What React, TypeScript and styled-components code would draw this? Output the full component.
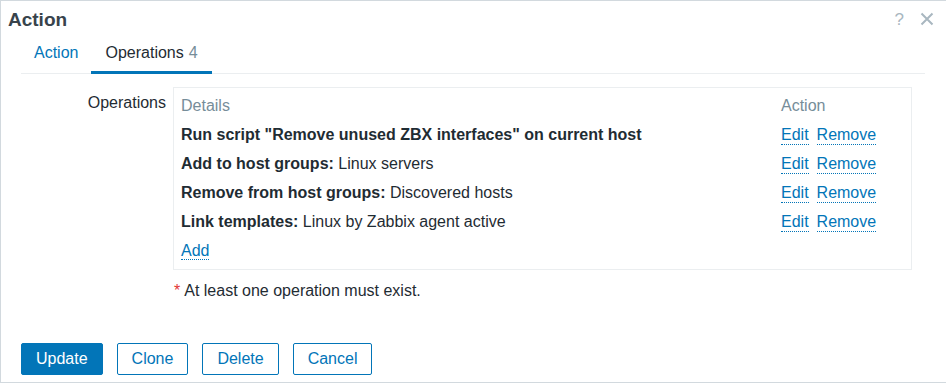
import { FC } from "react"
import styled, { createGlobalStyle } from "styled-components"

const GlobalStyle = createGlobalStyle`
  html, body {
    margin: 0;
    padding: 0;
    background: #ffffff;
  }
  body {
    font-family: "Liberation Sans", Arial, sans-serif;
    font-size: 16px;
    color: #1f2c33;
  }
  * {
    box-sizing: border-box;
  }
`

const Dialog = styled.div`
  width: 946px;
  height: 383px;
  border: 1px solid #d2d9de;
  border-right: none;
  display: flex;
  flex-direction: column;
  background: #ffffff;
`

const Header = styled.div`
  height: 36px;
  display: flex;
  align-items: center;
  justify-content: space-between;
  padding: 0 12px 0 7px;
`

const Title = styled.h1`
  margin: 0;
  font-size: 19px;
  font-weight: bold;
  color: #38434c;
  line-height: 1;
`

const HeaderIcons = styled.div`
  display: flex;
  align-items: center;
  gap: 16px;
  color: #a9b7c0;
`

const HelpIcon = styled.span`
  font-size: 17px;
  line-height: 1;
`

const CloseButton = styled.span`
  display: flex;
  align-items: center;
`

const Tabs = styled.div`
  display: flex;
  margin: 0 21px 0 20px;
  border-bottom: 1px solid #ebeef0;
`

const Tab = styled.div<{ $active?: boolean }>`
  height: 37px;
  display: flex;
  align-items: center;
  padding: 0 ${({ $active }) => ($active ? "14px" : "13px")} 3px;
  color: ${({ $active }) => ($active ? "#1f2c33" : "#0275b8")};
  border-bottom: 3px solid ${({ $active }) => ($active ? "#0275b8" : "transparent")};
  margin-bottom: -1px;
`

const TabCount = styled.span`
  color: #768d99;
  margin-left: 5px;
`

const Content = styled.div`
  flex: 1;
  padding: 13px 34px 0 21px;
`

const FormRow = styled.div`
  display: grid;
  grid-template-columns: 144px 739px;
  column-gap: 7px;
`

const FormLabel = styled.div`
  text-align: right;
  padding-top: 7px;
`

const OperationsBox = styled.div`
  border: 1px solid #ebeef0;
  padding: 3px 8px 4px 7px;
`

const OpRow = styled.div`
  display: grid;
  grid-template-columns: 1fr 122px;
  height: 29px;
  align-items: center;
`

const HeadCell = styled.div`
  color: #768d99;
`

const Bold = styled.b`
  font-weight: bold;
`

const Actions = styled.div`
  display: flex;
  gap: 8px;
`

const Link = styled.a`
  color: #0275b8;
  text-decoration: none;
  border-bottom: 1px dotted #0275b8;
  line-height: 19px;
  cursor: pointer;
`

const Required = styled.div`
  margin: 12px 0 0 152px;
  display: flex;
  align-items: baseline;
`

const Asterisk = styled.span`
  color: #e33734;
  margin-right: 4px;
`

const Footer = styled.div`
  display: flex;
  gap: 14px;
  padding: 0 0 7px 20px;
`

const Button = styled.button<{ $primary?: boolean }>`
  height: 32px;
  padding: 0 14px;
  font-family: inherit;
  font-size: 16px;
  border-radius: 2px;
  border: 1px solid #0275b8;
  background: ${({ $primary }) => ($primary ? "#0275b8" : "#ffffff")};
  color: ${({ $primary }) => ($primary ? "#ffffff" : "#0275b8")};
  cursor: pointer;
`

interface Operation {
  label: string
  value?: string
}

const operations: Operation[] = [
  { label: 'Run script "Remove unused ZBX interfaces" on current host' },
  { label: "Add to host groups:", value: "Linux servers" },
  { label: "Remove from host groups:", value: "Discovered hosts" },
  { label: "Link templates:", value: "Linux by Zabbix agent active" },
]

const App: FC = () => {
  return (
    <>
      <GlobalStyle />
      <Dialog>
        <Header>
          <Title>Action</Title>
          <HeaderIcons>
            <HelpIcon>?</HelpIcon>
            <CloseButton>
              <svg width="14" height="14" viewBox="0 0 14 14">
                <path
                  d="M1.5 1.5 L12.5 12.5 M12.5 1.5 L1.5 12.5"
                  stroke="#a9b7c0"
                  strokeWidth="2"
                  fill="none"
                />
              </svg>
            </CloseButton>
          </HeaderIcons>
        </Header>
        <Tabs>
          <Tab>Action</Tab>
          <Tab $active>
            Operations<TabCount>4</TabCount>
          </Tab>
        </Tabs>
        <Content>
          <FormRow>
            <FormLabel>Operations</FormLabel>
            <OperationsBox>
              <OpRow>
                <HeadCell>Details</HeadCell>
                <HeadCell>Action</HeadCell>
              </OpRow>
              {operations.map((op) => (
                <OpRow key={op.label}>
                  <div>
                    <Bold>{op.label}</Bold>
                    {op.value && <> {op.value}</>}
                  </div>
                  <Actions>
                    <Link>Edit</Link>
                    <Link>Remove</Link>
                  </Actions>
                </OpRow>
              ))}
              <OpRow>
                <div>
                  <Link>Add</Link>
                </div>
              </OpRow>
            </OperationsBox>
          </FormRow>
          <Required>
            <Asterisk>*</Asterisk>At least one operation must exist.
          </Required>
        </Content>
        <Footer>
          <Button $primary>Update</Button>
          <Button>Clone</Button>
          <Button>Delete</Button>
          <Button>Cancel</Button>
        </Footer>
      </Dialog>
    </>
  )
}

export default App
